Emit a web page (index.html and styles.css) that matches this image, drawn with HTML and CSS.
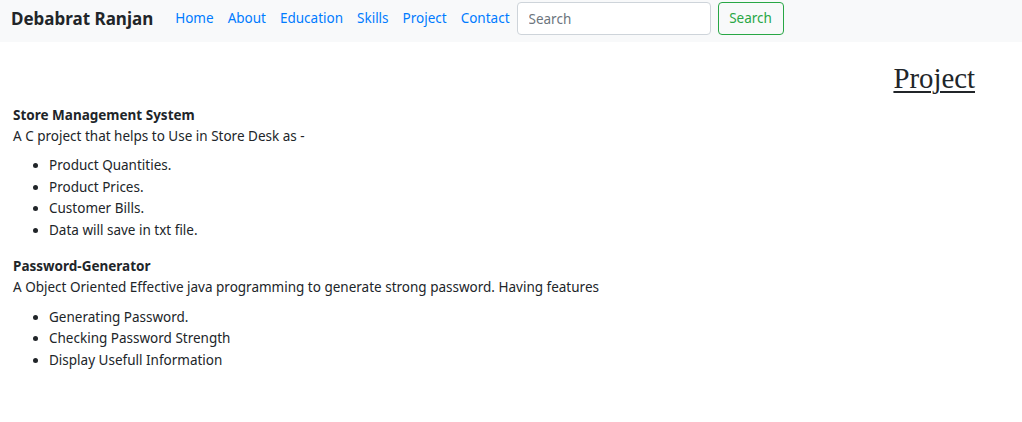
FILE: index.html
```html
<!DOCTYPE html>
<html lang="en">
<head>
<meta charset="utf-8">
<title>Debabrat Ranjan</title>
<link rel="stylesheet" href="styles.css">
</head>
<body>
<nav class="navbar">
  <a class="brand" href="#">Debabrat Ranjan</a>
  <ul class="nav-links">
    <li><a href="#">Home</a></li>
    <li><a href="#">About</a></li>
    <li><a href="#">Education</a></li>
    <li><a href="#">Skills</a></li>
    <li><a href="#">Project</a></li>
    <li><a href="#">Contact</a></li>
  </ul>
  <form class="search">
    <input class="search-input" type="search" placeholder="Search">
    <button class="search-btn" type="button">Search</button>
  </form>
</nav>
<main class="content">
  <h2 class="page-title">Project</h2>
  <section class="project">
    <h6 class="project-title">Store Management System</h6>
    <p class="project-desc">A C project that helps to Use in Store Desk as -</p>
    <ul class="features">
      <li>Product Quantities.</li>
      <li>Product Prices.</li>
      <li>Customer Bills.</li>
      <li>Data will save in txt file.</li>
    </ul>
  </section>
  <section class="project">
    <h6 class="project-title">Password-Generator</h6>
    <p class="project-desc">A Object Oriented Effective java programming to generate strong password. Having features</p>
    <ul class="features">
      <li>Generating Password.</li>
      <li>Checking Password Strength</li>
      <li>Display Usefull Information</li>
    </ul>
  </section>
</main>
</body>
</html>
```
FILE: styles.css
```css
* { box-sizing: border-box; }
body {
  margin: 0;
  font-family: "Noto Sans", "Open Sans", sans-serif;
  font-size: 13.5px;
  line-height: 1.5;
  color: #212529;
  background: #fff;
}
.navbar {
  display: flex;
  align-items: center;
  height: 42px;
  padding: 0 10px 5px 11px;
  background: #f8f9fa;
}
.brand {
  font-size: 17px;
  font-weight: 700;
  color: #212529;
  text-decoration: none;
  margin-right: 15px;
}
.nav-links {
  display: flex;
  list-style: none;
  margin: 0;
  padding: 0;
}
.nav-links a {
  display: block;
  padding: 0 7px;
  color: #007bff;
  text-decoration: none;
  font-size: 13.5px;
}
.search {
  display: flex;
  gap: 7px;
}
.search-input {
  width: 194px;
  height: 33px;
  border: 1px solid #ced4da;
  border-radius: 4px;
  padding: 0 11px;
  font: inherit;
  font-size: 13.5px;
  color: #212529;
  background: #fff;
}
.search-input::placeholder { color: #6c757d; }
.search-btn {
  height: 33px;
  width: 66px;
  border: 1px solid #28a745;
  border-radius: 4px;
  background: transparent;
  color: #28a745;
  font: inherit;
  font-size: 13.5px;
  padding: 0;
}
.content {
  padding: 0 13px;
}
.page-title {
  margin: 19px 34px 9px 0;
  text-align: right;
  font-family: "Liberation Serif", serif;
  font-weight: 400;
  font-size: 28.8px;
  line-height: 1.2;
  text-decoration: underline;
  text-decoration-thickness: 2px;
  text-underline-offset: 3px;
}
.project-title {
  margin: 0 0 1px;
  font-size: 13.5px;
  font-weight: 700;
}
.project-desc {
  margin: 0 0 9px;
}
.features {
  margin: 0 0 15px;
  padding-left: 36px;
}
.features li {
  line-height: 21.5px;
}
```
